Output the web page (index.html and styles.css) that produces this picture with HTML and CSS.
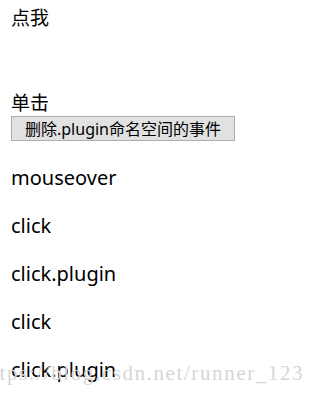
FILE: index.html
```html
<!DOCTYPE html>
<html lang="zh-CN">
<head>
    <meta charset="UTF-8">
    <title>命名空间</title>
    <link rel="stylesheet" href="styles.css">
</head>
<body>
    <div class="target">点我</div>
    <div class="label">单击</div>
    <button class="remove-btn">删除.plugin命名空间的事件</button>

    <div class="log">
        <p>mouseover</p>
        <p>click</p>
        <p>click.plugin</p>
        <p>click</p>
        <p>click.plugin</p>
    </div>

    <div class="watermark">https://blog.csdn.net/runner_123</div>
</body>
</html>
```

FILE: styles.css
```css
* {
    margin: 0;
    padding: 0;
    box-sizing: border-box;
}

body {
    font-family: "Noto Sans", "Noto Sans CJK SC", sans-serif;
    font-size: 19px;
    color: #000;
    background: #fff;
    padding: 5px 11px 0;
    position: relative;
    height: 396px;
    overflow: hidden;
}

.target {
    line-height: 26px;
    height: 85px;
}

.label {
    line-height: 26px;
}

.remove-btn {
    display: block;
    width: 224px;
    height: 25px;
    background: #e1e1e1;
    border: 1px solid #adadad;
    font-family: "Noto Sans", "Noto Sans CJK SC", sans-serif;
    font-size: 16px;
    line-height: 22px;
    color: #000;
}

.log {
    padding-top: 23px;
}

.log p {
    font-size: 20px;
    line-height: 27px;
    margin-bottom: 21px;
}

.watermark {
    position: absolute;
    left: -20px;
    top: 361px;
    font-family: "Liberation Serif", serif;
    font-size: 21px;
    letter-spacing: 1.6px;
    color: #d6d6d6;
    white-space: nowrap;
}
```
